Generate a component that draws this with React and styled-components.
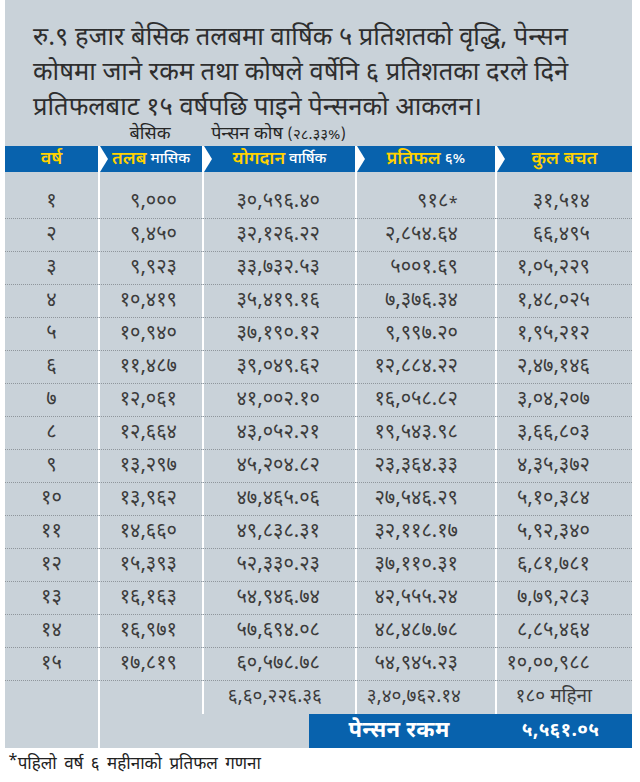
import React from "react";
import styled, { createGlobalStyle } from "styled-components";

const Global = createGlobalStyle`
  html, body { margin: 0; padding: 0; background: #ffffff; }
  body { font-family: "Noto Sans Devanagari", "Noto Sans", "Lohit Devanagari", sans-serif; color: #333; }
`;

const COLS = "93px 104px 153px 140px 137px";

const Page = styled.div`
  width: 640px;
  padding: 0 0 0 5px;
  box-sizing: border-box;
`;

const Panel = styled.div`
  width: 627px;
  background: #c9d2d9;
  display: flex;
  flex-direction: column;
`;

const Title = styled.div`
  padding: 21px 0 0 28px;
  font-size: 25.5px;
  line-height: 35px;
  color: #2e2e2e;
  height: 103px;
  box-sizing: content-box;
`;

const TitleLine = styled.div`
  white-space: nowrap;
`;

const SubHead = styled.div`
  display: grid;
  grid-template-columns: ${COLS};
  height: 22px;
  padding-top: 1px;
  box-sizing: border-box;
  line-height: 20px;
  font-size: 18px;
  color: #262626;
`;

const SubLabel = styled.div`
  text-align: center;
  white-space: nowrap;
`;

const SubPct = styled.span`
  font-size: 15px;
`;

const HeaderRow = styled.div`
  display: grid;
  grid-template-columns: ${COLS};
  height: 26px;
  background: #0862ad;
`;

const HeadCell = styled.div`
  position: relative;
  display: flex;
  align-items: center;
  justify-content: center;
  gap: 4px;
  border-left: ${(p) => (p.$first ? "none" : "2px solid #ffffff")};
  color: #ffd200;
  font-size: 18px;
  font-weight: 600;
  white-space: nowrap;
  &::before {
    content: "";
    display: ${(p) => (p.$first ? "none" : "block")};
    position: absolute;
    left: 0;
    top: 0;
    border-top: 13px solid transparent;
    border-bottom: 13px solid transparent;
    border-left: 8px solid #ffffff;
  }
`;

const HeadSub = styled.span`
  color: #ffffff;
  font-size: 15px;
  font-weight: 500;
`;

const Row = styled.div`
  display: grid;
  grid-template-columns: ${COLS};
  height: ${(p) => (p.$first ? "47px" : "33px")};
  border-bottom: ${(p) => (p.$last ? "none" : "1px dotted #8f969c")};
  box-sizing: border-box;
  font-size: ${(p) => (p.$last ? 19 : 20)}px;
  color: #3c3c3c;
`;

const Cell = styled.div`
  display: flex;
  align-items: center;
  padding-top: ${(p) => (p.$first ? "14px" : "0")};
  justify-content: ${(p) =>
    p.$align === "right" ? "flex-end" : p.$align === "left" ? "flex-start" : "center"};
  padding-right: ${(p) => p.$pr || 0}px;
  border-left: ${(p) => (p.$noBorder ? "none" : "2px solid #ffffff")};
  white-space: nowrap;
`;

const Sup = styled.sup`
  font-size: 16px;
  line-height: 0;
  position: relative;
  top: 3px;
`;

const PensionRow = styled.div`
  display: grid;
  grid-template-columns: 93px 104px 107px 1fr;
  height: 34px;
`;

const Blank = styled.div`
  border-left: ${(p) => (p.$border ? "2px solid #ffffff" : "none")};
`;

const PensionBox = styled.div`
  background: #0862ad;
  display: grid;
  grid-template-columns: 180px 1fr;
  align-items: center;
  color: #ffffff;
  font-weight: 700;
`;

const PensionText = styled.div`
  text-align: center;
  white-space: nowrap;
  font-size: ${(p) => p.$size}px;
  letter-spacing: 0.3px;
`;

const Footnote = styled.div`
  padding: 6px 0 0 3px;
  font-size: 17px;
  word-spacing: 3px;
  color: #222;
  white-space: nowrap;
`;

const rows = [
  ["१", "९,०००", "३०,५९६.४०", "९१८", "३१,५१४"],
  ["२", "९,४५०", "३२,१२६.२२", "२,८५४.६४", "६६,४९५"],
  ["३", "९,९२३", "३३,७३२.५३", "५००१.६९", "१,०५,२२९"],
  ["४", "१०,४१९", "३५,४१९.१६", "७,३७६.३४", "१,४८,०२५"],
  ["५", "१०,९४०", "३७,१९०.१२", "९,९९७.२०", "१,९५,२१२"],
  ["६", "११,४८७", "३९,०४९.६२", "१२,८८४.२२", "२,४७,१४६"],
  ["७", "१२,०६१", "४१,००२.१०", "१६,०५८.८२", "३,०४,२०७"],
  ["८", "१२,६६४", "४३,०५२.२१", "१९,५४३.९८", "३,६६,८०३"],
  ["९", "१३,२९७", "४५,२०४.८२", "२३,३६४.३३", "४,३५,३७२"],
  ["१०", "१३,९६२", "४७,४६५.०६", "२७,५४६.२९", "५,१०,३८४"],
  ["११", "१४,६६०", "४९,८३८.३१", "३२,११८.१७", "५,९२,३४०"],
  ["१२", "१५,३९३", "५२,३३०.२३", "३७,११०.३१", "६,८१,७८१"],
  ["१३", "१६,१६३", "५४,९४६.७४", "४२,५५५.२४", "७,७९,२८३"],
  ["१४", "१६,९७१", "५७,६९४.०८", "४८,४८७.७८", "८,८५,४६४"],
  ["१५", "१७,८१९", "६०,५७८.७८", "५४,९४५.२३", "१०,००,९८८"],
];

export default function App() {
  return (
    <Page>
      <Global />
      <Panel>
        <Title>
          <TitleLine>रु.९ हजार बेसिक तलबमा वार्षिक ५ प्रतिशतको वृद्धि, पेन्सन</TitleLine>
          <TitleLine>कोषमा जाने रकम तथा कोषले वर्षेनि ६ प्रतिशतका दरले दिने</TitleLine>
          <TitleLine>प्रतिफलबाट १५ वर्षपछि पाइने पेन्सनको आकलन।</TitleLine>
        </Title>
        <SubHead>
          <div />
          <SubLabel>बेसिक</SubLabel>
          <SubLabel>
            पेन्सन कोष <SubPct>(२८.३३%)</SubPct>
          </SubLabel>
        </SubHead>
        <HeaderRow>
          <HeadCell $first>वर्ष</HeadCell>
          <HeadCell>
            तलब <HeadSub>मासिक</HeadSub>
          </HeadCell>
          <HeadCell>
            योगदान <HeadSub>वार्षिक</HeadSub>
          </HeadCell>
          <HeadCell>
            प्रतिफल <HeadSub>६%</HeadSub>
          </HeadCell>
          <HeadCell>कुल बचत</HeadCell>
        </HeaderRow>
        {rows.map((r, i) => (
          <Row key={r[0]} $first={i === 0}>
            <Cell $noBorder $first={i === 0}>{r[0]}</Cell>
            <Cell $align="right" $pr={25} $first={i === 0}>{r[1]}</Cell>
            <Cell $align="right" $pr={35} $first={i === 0}>{r[2]}</Cell>
            <Cell $align="right" $pr={37} $first={i === 0}>
              {r[3]}
              {i === 0 && <Sup>*</Sup>}
            </Cell>
            <Cell $align="right" $pr={42} $first={i === 0}>{r[4]}</Cell>
          </Row>
        ))}
        <Row $last>
          <Cell $noBorder />
          <Cell />
          <Cell $align="right" $pr={33}>६,६०,२२६.३६</Cell>
          <Cell $align="right" $pr={34}>३,४०,७६२.१४</Cell>
          <Cell $align="right" $pr={40}>१८० महिना</Cell>
        </Row>
        <PensionRow>
          <Blank />
          <Blank $border />
          <Blank />
          <PensionBox>
            <PensionText $size={22}>पेन्सन रकम</PensionText>
            <PensionText $size={19}>५,५६१.०५</PensionText>
          </PensionBox>
        </PensionRow>
      </Panel>
      <Footnote>
        <Sup>*</Sup>पहिलो वर्ष ६ महीनाको प्रतिफल गणना
      </Footnote>
    </Page>
  );
}
